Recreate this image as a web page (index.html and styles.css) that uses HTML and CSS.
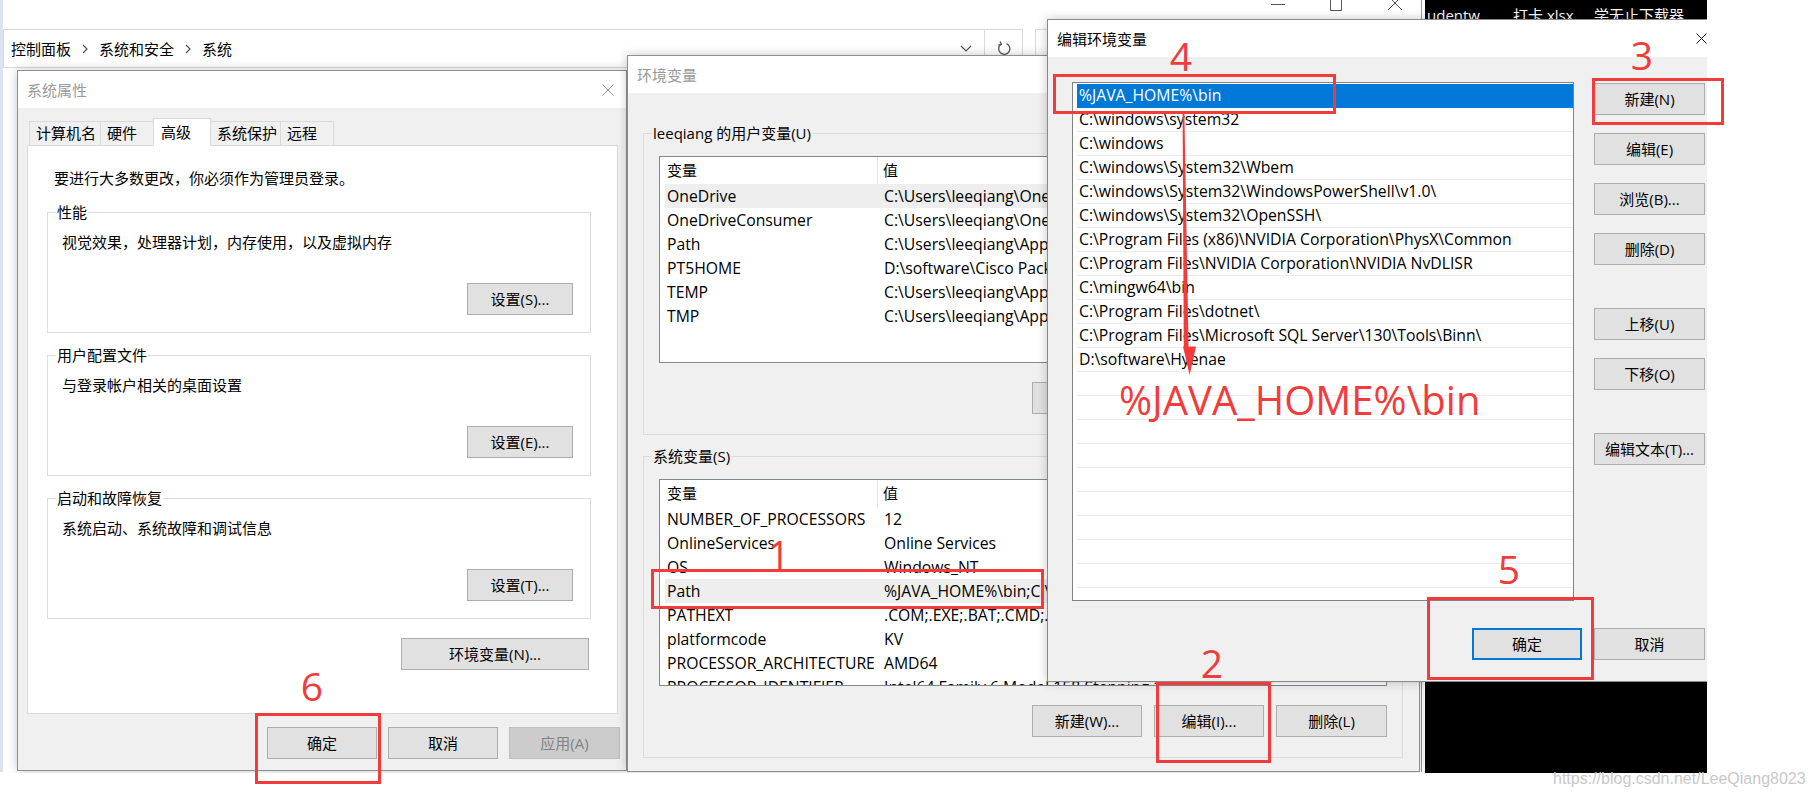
FILE: index.html
```html
<!DOCTYPE html>
<html lang="zh-CN">
<head>
<meta charset="utf-8">
<title>环境变量</title>
<link rel="stylesheet" href="styles.css">
</head>
<body>
<div class="shot">
  <div class="explorer">
    <div class="ex-title">
      <svg class="ex-controls" width="140" height="12" viewBox="0 0 140 12"><path d="M3 4.5H17" stroke="#555" stroke-width="1"/><path d="M62.5 -1V10.5H73.5V-1" fill="none" stroke="#555" stroke-width="1"/><path d="M120 -4L134 10M134 -4L120 10" stroke="#555" stroke-width="1"/></svg>
    </div>
    <div class="ex-address">
      <div class="addr-box">
        <span class="crumb">控制面板</span>
        <svg class="chev" width="6" height="10" viewBox="0 0 6 10"><path d="M1 1L5 5L1 9" fill="none" stroke="#555" stroke-width="1.2"/></svg>
        <span class="crumb">系统和安全</span>
        <svg class="chev" width="6" height="10" viewBox="0 0 6 10"><path d="M1 1L5 5L1 9" fill="none" stroke="#555" stroke-width="1.2"/></svg>
        <span class="crumb">系统</span>
        <span class="addr-fill"></span>
        <svg class="dd" width="12" height="7" viewBox="0 0 12 7"><path d="M1 1L6 6L11 1" fill="none" stroke="#555" stroke-width="1.2"/></svg>
        <span class="addr-sep"></span>
        <svg class="refresh" width="14" height="15" viewBox="0 0 14 15"><path d="M4 3.2A5.6 5.6 0 1 0 9.5 2.6" fill="none" stroke="#555" stroke-width="1.3"/><path d="M3.2 0.5L4.4 3.4L1.3 4.2" fill="none" stroke="#555" stroke-width="1.3"/></svg>
      </div>
      <div class="search-box"></div>
    </div>
  </div>

  <div class="desktop">
    <span class="dlabel dl1">udentw...</span>
    <span class="dlabel dl2">打卡.xlsx</span>
    <span class="dlabel dl3">学无止下载器</span>
  </div>

  <div class="dlg sys">
    <div class="dlg-title inactive">
      <span class="dlg-name">系统属性</span>
      <svg class="sys-x" width="12" height="12" viewBox="0 0 12 12"><path d="M0.5 0.5L11.5 11.5M11.5 0.5L0.5 11.5" stroke="#8c8c8c" stroke-width="1"/></svg>
    </div>
    <div class="sys-body">
      <div class="tabs">
        <div class="tab t1">计算机名</div>
        <div class="tab t2">硬件</div>
        <div class="tab t3 active">高级</div>
        <div class="tab t4">系统保护</div>
        <div class="tab t5">远程</div>
      </div>
      <div class="tab-panel">
        <p class="note">要进行大多数更改，你必须作为管理员登录。</p>
        <div class="group">
          <span class="group-label">性能</span>
          <p class="group-text">视觉效果，处理器计划，内存使用，以及虚拟内存</p>
          <div class="group-actions"><button class="btn b106">设置(S)...</button></div>
        </div>
        <div class="group">
          <span class="group-label">用户配置文件</span>
          <p class="group-text">与登录帐户相关的桌面设置</p>
          <div class="group-actions"><button class="btn b106">设置(E)...</button></div>
        </div>
        <div class="group">
          <span class="group-label">启动和故障恢复</span>
          <p class="group-text">系统启动、系统故障和调试信息</p>
          <div class="group-actions"><button class="btn b106">设置(T)...</button></div>
        </div>
        <div class="panel-actions"><button class="btn b188">环境变量(N)...</button></div>
      </div>
      <div class="sys-footer">
        <button class="btn b110">确定</button>
        <button class="btn b110">取消</button>
        <button class="btn b111 disabled">应用(A)</button>
      </div>
    </div>
  </div>

  <div class="dlg env">
    <div class="dlg-title inactive"><span class="dlg-name">环境变量</span></div>
    <div class="env-body">
      <div class="egroup">
        <span class="group-label">leeqiang 的用户变量(U)</span>
        <div class="listbox">
          <div class="lhead"><span class="hc1">变量</span><span class="hc2">值</span></div>
          <div class="lrow hl"><span class="c1">OneDrive</span><span class="c2">C:\Users\leeqiang\OneDrive</span></div>
          <div class="lrow"><span class="c1">OneDriveConsumer</span><span class="c2">C:\Users\leeqiang\OneDrive</span></div>
          <div class="lrow"><span class="c1">Path</span><span class="c2">C:\Users\leeqiang\AppData\Local\Microsoft\WindowsApps;</span></div>
          <div class="lrow"><span class="c1">PT5HOME</span><span class="c2">D:\software\Cisco Packet Tracer 7.2.2</span></div>
          <div class="lrow"><span class="c1">TEMP</span><span class="c2">C:\Users\leeqiang\AppData\Local\Temp</span></div>
          <div class="lrow"><span class="c1">TMP</span><span class="c2">C:\Users\leeqiang\AppData\Local\Temp</span></div>
        </div>
        <div class="egroup-actions">
          <button class="btn b110">新建(N)...</button>
          <button class="btn b110">编辑(E)...</button>
          <button class="btn b111">删除(D)</button>
        </div>
      </div>
      <div class="egroup">
        <span class="group-label">系统变量(S)</span>
        <div class="listbox">
          <div class="lhead"><span class="hc1">变量</span><span class="hc2">值</span></div>
          <div class="lrow"><span class="c1">NUMBER_OF_PROCESSORS</span><span class="c2">12</span></div>
          <div class="lrow"><span class="c1">OnlineServices</span><span class="c2">Online Services</span></div>
          <div class="lrow"><span class="c1">OS</span><span class="c2">Windows_NT</span></div>
          <div class="lrow hl"><span class="c1">Path</span><span class="c2">%JAVA_HOME%\bin;C:\windows\system32;C:\windows</span></div>
          <div class="lrow"><span class="c1">PATHEXT</span><span class="c2">.COM;.EXE;.BAT;.CMD;.VBS;.VBE;.JS</span></div>
          <div class="lrow"><span class="c1">platformcode</span><span class="c2">KV</span></div>
          <div class="lrow"><span class="c1">PROCESSOR_ARCHITECTURE</span><span class="c2">AMD64</span></div>
          <div class="lrow"><span class="c1">PROCESSOR_IDENTIFIER</span><span class="c2">Intel64 Family 6 Model 158 Stepping 10</span></div>
        </div>
        <div class="egroup-actions">
          <button class="btn b110">新建(W)...</button>
          <button class="btn b110">编辑(I)...</button>
          <button class="btn b111">删除(L)</button>
        </div>
      </div>
    </div>
  </div>

  <div class="dlg edit">
    <div class="dlg-title">
      <span class="dlg-name">编辑环境变量</span>
      <svg class="edit-x" width="11" height="11" viewBox="0 0 11 11"><path d="M0.5 0.5L10.5 10.5M10.5 0.5L0.5 10.5" stroke="#111" stroke-width="1"/></svg>
    </div>
    <div class="edit-body">
      <div class="plist">
        <div class="prow sel">%JAVA_HOME%\bin</div>
        <div class="prow">C:\windows\system32</div>
        <div class="prow">C:\windows</div>
        <div class="prow">C:\windows\System32\Wbem</div>
        <div class="prow">C:\windows\System32\WindowsPowerShell\v1.0\</div>
        <div class="prow">C:\windows\System32\OpenSSH\</div>
        <div class="prow">C:\Program Files (x86)\NVIDIA Corporation\PhysX\Common</div>
        <div class="prow">C:\Program Files\NVIDIA Corporation\NVIDIA NvDLISR</div>
        <div class="prow">C:\mingw64\bin</div>
        <div class="prow">C:\Program Files\dotnet\</div>
        <div class="prow">C:\Program Files\Microsoft SQL Server\130\Tools\Binn\</div>
        <div class="prow">D:\software\Hyenae</div>
        <div class="prow"></div><div class="prow"></div><div class="prow"></div><div class="prow"></div>
        <div class="prow"></div><div class="prow"></div><div class="prow"></div><div class="prow"></div>
        <div class="prow"></div><div class="prow"></div>
      </div>
      <div class="edit-side">
        <button class="btn b111">新建(N)</button>
        <button class="btn b111">编辑(E)</button>
        <button class="btn b111">浏览(B)...</button>
        <button class="btn b111">删除(D)</button>
        <button class="btn b111 gap-before">上移(U)</button>
        <button class="btn b111">下移(O)</button>
        <button class="btn b111 gap-before">编辑文本(T)...</button>
      </div>
      <div class="edit-footer">
        <button class="btn b110 default">确定</button>
        <button class="btn b111">取消</button>
      </div>
    </div>
  </div>
</div>

<div class="annot">
  <div class="mark m1"></div>
  <div class="mark m2"></div>
  <div class="mark m3"></div>
  <div class="mark m4"></div>
  <div class="mark m5"></div>
  <div class="mark m6"></div>
  <span class="num n1">1</span>
  <span class="num n2">2</span>
  <span class="num n3">3</span>
  <span class="num n4">4</span>
  <span class="num n5">5</span>
  <span class="num n6">6</span>
  <svg class="arrow" width="30" height="270" viewBox="0 0 30 270"><path d="M7.6 4L9.4 4L13.6 238L16.2 238L12.8 238L8.8 238Z" fill="#f23c3c"/><path d="M8 236.5L21 236.5L14.6 265Z" fill="#f23c3c"/></svg>
  <span class="bigtext">%JAVA_HOME%\bin</span>
</div>

<div class="watermark">https://blog.csdn.net/LeeQiang8023</div>
</body>
</html>
```

FILE: styles.css
```css
* { box-sizing: border-box; }

body {
  margin: 0;
  width: 1812px;
  height: 797px;
  overflow: hidden;
  position: relative;
  background: #fff;
  color: #000;
  font-family: "Open Sans", "Noto Sans CJK SC", sans-serif;
  font-size: 15px;
  line-height: 20px;
}

p { margin: 0; }

.shot {
  position: absolute;
  left: 0;
  top: 0;
  width: 1707px;
  height: 773px;
  overflow: hidden;
  background: #fff;
  z-index: 1;
}

/* ---------- explorer window behind ---------- */
.explorer {
  position: absolute;
  left: 0;
  top: 0;
  width: 1422px;
  height: 772px;
  background: #fff;
  border-left: 3px solid #dbe2f1;
  border-right: 1px solid #9c9c9c;
}

.ex-title {
  height: 29px;
  display: flex;
  justify-content: flex-end;
  padding-right: 13px;
}

.ex-controls { display: block; }

.ex-address {
  height: 38px;
  display: flex;
}

.addr-box {
  width: 1020px;
  height: 39px;
  border: 1px solid #d9d9d9;
  display: flex;
  align-items: center;
  padding-left: 7px;
}

.crumb { line-height: 20px; }

.chev { margin: 0 11px 0 11px; flex: none; }

.addr-fill { flex: 1; }

.dd { flex: none; margin-right: 12px; }

.addr-sep {
  align-self: stretch;
  width: 1px;
  background: #d9d9d9;
}

.refresh { flex: none; margin: 0 11px 0 12px; }

.search-box {
  margin-left: 12px;
  width: 380px;
  height: 39px;
  border: 1px solid #d9d9d9;
}

/* ---------- desktop strip ---------- */
.desktop {
  position: absolute;
  left: 1425px;
  top: 0;
  width: 282px;
  height: 773px;
  background: #000;
}

.dlabel {
  position: absolute;
  top: 5px;
  color: #fff;
  white-space: nowrap;
}
.dl1 { left: 2px; }
.dl2 { left: 88px; }
.dl3 { left: 169px; }

/* ---------- dialogs ---------- */
.dlg {
  position: absolute;
  background: #f0f0f0;
  border: 1px solid #8e8e8e;
  box-shadow: 0 0 10px rgba(0, 0, 0, 0.22);
  overflow: hidden;
}

.dlg-title {
  height: 37px;
  background: #fff;
  display: flex;
  align-items: center;
  padding-left: 9px;
}

.dlg-title.inactive { color: #9a9a9a; }

.dlg-name { flex: 1; white-space: nowrap; }

.btn {
  display: block;
  height: 32px;
  padding: 0;
  margin: 0;
  border: 1px solid #adadad;
  background: #e1e1e1;
  color: #000;
  font: inherit;
  line-height: 30px;
  text-align: center;
  white-space: nowrap;
}
.b106 { width: 106px; }
.b110 { width: 110px; }
.b111 { width: 111px; }
.b188 { width: 188px; }

.btn.disabled {
  background: #cccccc;
  border-color: #bfbfbf;
  color: #838383;
}

.btn.default {
  border: 2px solid #0078d7;
  line-height: 28px;
}

/* system properties */
.sys {
  left: 17px;
  top: 70px;
  width: 610px;
  height: 701px;
}

.sys-x { margin-right: 12px; flex: none; }

.sys-body { padding: 10px 8px 0 9px; }

.tabs {
  height: 27px;
  display: flex;
  align-items: flex-end;
  padding-left: 2px;
  position: relative;
  z-index: 1;
}

.tab {
  height: 24px;
  line-height: 22px;
  border: 1px solid #d9d9d9;
  border-bottom: none;
  background: #f0f0f0;
  padding-left: 6px;
  white-space: nowrap;
  margin-right: -1px;
}
.t1 { width: 72px; }
.t2 { width: 54px; }
.t3 { width: 58px; }
.t4 { width: 71px; }
.t5 { width: 54px; }

.tab.active {
  height: 28px;
  line-height: 26px;
  background: #fff;
  padding-left: 7px;
  margin-bottom: -1px;
}

.tab-panel {
  width: 591px;
  height: 569px;
  background: #fff;
  border: 1px solid #d9d9d9;
  padding: 22px 26px 0 19px;
}

.note { padding-left: 7px; margin-bottom: 24px; }

.group {
  position: relative;
  border: 1px solid #dcdcdc;
  padding: 19px 17px 17px 14px;
  margin-bottom: 22px;
}

.group-label {
  position: absolute;
  top: -11px;
  left: 8px;
  padding: 0 1px;
  background: #fff;
  white-space: nowrap;
}

.group-actions {
  margin-top: 31px;
  display: flex;
  justify-content: flex-end;
}

.panel-actions {
  margin-top: -3px;
  display: flex;
  justify-content: flex-end;
  padding-right: 2px;
}

.sys-footer {
  margin-top: 13px;
  margin-right: -2px;
  display: flex;
  justify-content: flex-end;
  gap: 11px;
}

/* environment variables */
.env {
  left: 627px;
  top: 55px;
  width: 793px;
  height: 717px;
}

.env-body { padding: 40px 16px 0 15px; }

.egroup {
  position: relative;
  border: 1px solid #dcdcdc;
  padding: 22px 15px 20px 15px;
  margin-bottom: 21px;
}

.egroup .group-label { background: #f0f0f0; left: 8px; }

.listbox {
  height: 207px;
  background: #fff;
  border: 1px solid #828790;
  overflow: hidden;
}

.lhead {
  height: 27px;
  display: flex;
  line-height: 27px;
}

.hc1 {
  width: 218px;
  padding-left: 7px;
  border-right: 1px solid #e5e5e5;
}

.hc2 { padding-left: 5px; }

.lrow {
  margin-left: 5px;
  height: 24px;
  line-height: 24px;
  display: flex;
  white-space: nowrap;
  font-size: 15.75px;
}

.lrow.hl { background: #eeeeee; }

.c1 { width: 219px; flex: none; padding-left: 2px; }
.c2 { white-space: nowrap; }

.egroup-actions {
  margin-top: 19px;
  display: flex;
  justify-content: flex-end;
  gap: 12px;
}

/* edit dialog */
.edit {
  left: 1047px;
  top: 19px;
  width: 677px;
  height: 663px;
  border-color: #8a8a8a;
  z-index: 2;
}

.edit-x { margin-right: 16px; flex: none; }

.edit-body {
  padding: 25px 0 0 24px;
  display: grid;
  grid-template-columns: 502px 111px;
  column-gap: 20px;
}

.plist {
  height: 519px;
  background: #fff;
  border: 1px solid #828282;
  padding: 1px 0 0 4px;
  overflow: hidden;
}

.prow {
  height: 24px;
  line-height: 23px;
  padding-left: 2px;
  border-bottom: 1px solid #ececec;
  white-space: nowrap;
  font-size: 15.75px;
}

.prow.sel {
  background: #0078d7;
  color: #fff;
  border-bottom-color: #0078d7;
}

.edit-side {
  padding-top: 1px;
  display: flex;
  flex-direction: column;
  gap: 18px;
}

.gap-before { margin-top: 25px; }

.edit-footer {
  grid-column: 1 / 3;
  margin-top: 27px;
  display: flex;
  justify-content: flex-end;
  gap: 12px;
}

/* ---------- red annotations ---------- */
.annot {
  position: absolute;
  left: 0;
  top: 0;
  width: 1812px;
  height: 797px;
  pointer-events: none;
  z-index: 5;
}

.mark {
  position: absolute;
  border: 3px solid #f23c3c;
}
.m1 { left: 651px; top: 569px; width: 393px; height: 40px; }
.m2 { left: 1156px; top: 682px; width: 115px; height: 81px; }
.m3 { left: 1592px; top: 78px; width: 132px; height: 47px; }
.m4 { left: 1053px; top: 74px; width: 283px; height: 40px; }
.m5 { left: 1427px; top: 597px; width: 167px; height: 83px; }
.m6 { left: 255px; top: 713px; width: 126px; height: 71px; }

.num {
  position: absolute;
  width: 30px;
  text-align: center;
  font-family: "Open Sans", sans-serif;
  font-size: 39px;
  line-height: 39px;
  color: #f23c3c;
}
.n1 { left: 764px; top: 534px; }
.n2 { left: 1197px; top: 643px; }
.n3 { left: 1627px; top: 35px; }
.n4 { left: 1166px; top: 36px; }
.n5 { left: 1494px; top: 549px; }
.n6 { left: 297px; top: 666px; }

.arrow {
  position: absolute;
  left: 1175px;
  top: 110px;
}

.bigtext {
  position: absolute;
  left: 1119px;
  top: 380px;
  font-family: "Open Sans", sans-serif;
  font-size: 40px;
  line-height: 40px;
  color: #f23c3c;
  white-space: nowrap;
}

.watermark {
  position: absolute;
  left: 1553px;
  top: 770px;
  font-family: "Liberation Sans", sans-serif;
  font-size: 16px;
  line-height: 18px;
  color: #c8c8c8;
  white-space: nowrap;
  z-index: 6;
}
```
